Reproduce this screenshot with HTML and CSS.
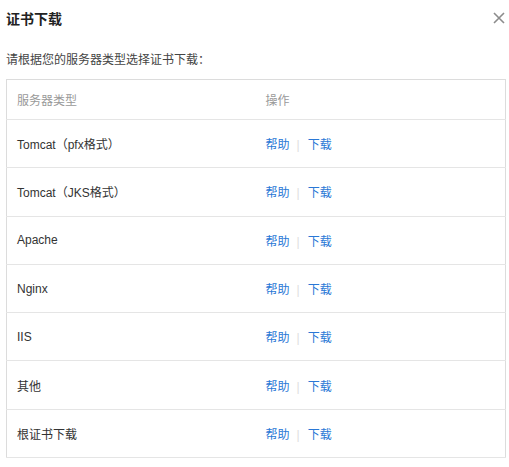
FILE: index.html
```html
<!DOCTYPE html>
<html lang="zh-CN">
<head>
    <meta charset="UTF-8">
    <title>证书下载</title>
    <link rel="stylesheet" href="styles.css">
</head>
<body>
    <div class="dialog">
        <div class="dialog-header">
            <h2 class="dialog-title">证书下载</h2>
            <span class="close-btn">
                <svg width="12" height="12" viewBox="0 0 12 12">
                    <path d="M1 1L11 11M11 1L1 11" stroke="#8c8c8c" stroke-width="1.6" fill="none"/>
                </svg>
            </span>
        </div>

        <p class="tip">请根据您的服务器类型选择证书下载：</p>

        <table class="cert-table">
            <thead>
                <tr>
                    <th class="col-type">服务器类型</th>
                    <th>操作</th>
                </tr>
            </thead>
            <tbody>
                <tr><td>Tomcat（pfx格式）</td><td><a href="#">帮助</a><span class="sep">|</span><a href="#">下载</a></td></tr>
                <tr><td>Tomcat（JKS格式）</td><td><a href="#">帮助</a><span class="sep">|</span><a href="#">下载</a></td></tr>
                <tr><td>Apache</td><td><a href="#">帮助</a><span class="sep">|</span><a href="#">下载</a></td></tr>
                <tr><td>Nginx</td><td><a href="#">帮助</a><span class="sep">|</span><a href="#">下载</a></td></tr>
                <tr><td>IIS</td><td><a href="#">帮助</a><span class="sep">|</span><a href="#">下载</a></td></tr>
                <tr><td>其他</td><td><a href="#">帮助</a><span class="sep">|</span><a href="#">下载</a></td></tr>
                <tr><td>根证书下载</td><td><a href="#">帮助</a><span class="sep">|</span><a href="#">下载</a></td></tr>
            </tbody>
        </table>
    </div>
</body>
</html>
```

FILE: styles.css
```css
* {
    margin: 0;
    padding: 0;
    box-sizing: border-box;
}

body {
    background-color: #fff;
    font-family: 'Liberation Sans', 'Noto Sans CJK SC', sans-serif;
    font-size: 12px;
    color: #333;
}

.dialog {
    width: 509px;
    padding: 0 3px 0 6px;
}

.dialog-header {
    height: 36px;
    display: flex;
    justify-content: space-between;
    align-items: center;
}

.dialog-title {
    font-size: 14px;
    font-weight: bold;
    color: #222;
}

.close-btn {
    display: flex;
    margin-right: 1px;
}

.tip {
    margin-top: 15px;
    line-height: 18px;
    color: #444;
}

.cert-table {
    margin-top: 10px;
    width: 100%;
    border-collapse: collapse;
    border: 1px solid #dcdcdc;
}

.cert-table th,
.cert-table td {
    text-align: left;
    padding-left: 10px;
    border-bottom: 1px solid #e5e5e5;
}

.cert-table th {
    height: 40px;
    font-weight: normal;
    color: #999;
}

.cert-table td {
    height: 48.3px;
}

.cert-table .col-type {
    width: 249px;
}

.cert-table a {
    color: #2a78d6;
    text-decoration: none;
}

.sep {
    color: #dedede;
    margin: 0 8px 0 7px;
}
```
